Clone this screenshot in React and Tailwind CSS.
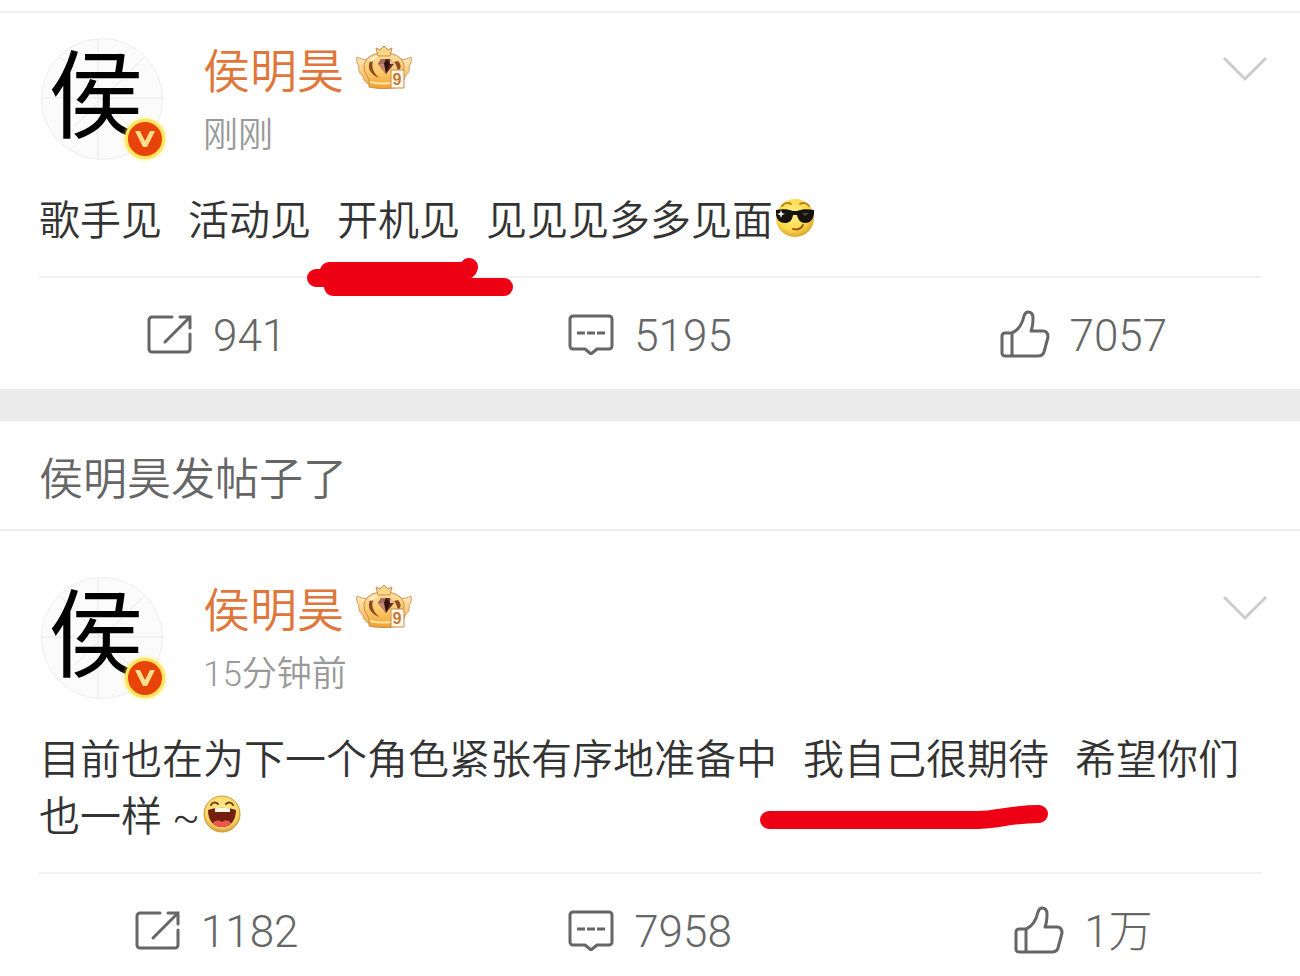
// src/App.jsx
import React from 'react';

const CrownBadge = () => (
  <svg viewBox="0 0 56 46" className="mt-[5px] w-14 h-[46px]" aria-label="VIP 9" role="img">
    <defs>
      <linearGradient id="crownGold" x1="0" y1="0" x2="0" y2="1">
        <stop offset="0" stopColor="#ffe0a0" />
        <stop offset="0.55" stopColor="#fbc869" />
        <stop offset="1" stopColor="#efa02e" />
      </linearGradient>
      <linearGradient id="crownWing" x1="0" y1="0" x2="0" y2="1">
        <stop offset="0" stopColor="#ffe9bd" />
        <stop offset="1" stopColor="#f5b24c" />
      </linearGradient>
    </defs>
    {/* wings */}
    <path d="M13 14C9 15 4 14 1 12c-1 3 0 7 2 9-1 5 1 8 4 10 0 4 3 7 7 9zM43 14c4 1 9 0 12-2 1 3 0 7-2 9 1 5-1 8-4 10 0 4-3 7-7 9z" fill="url(#crownWing)" stroke="#d79a5c" strokeWidth="1" />
    {/* dome and base */}
    <path d="M28 8C15 8 8 14 8 22c0 6 4 9 5 13v7c9 2 21 2 30 0v-7c1-4 5-7 5-13 0-8-7-14-20-14z" fill="url(#crownGold)" stroke="#cf8c4c" strokeWidth="1" />
    <path d="M14 37c9 2 19 2 28 0" fill="none" stroke="#ffe6a5" strokeWidth="2" />
    <path d="M14 16c-3 7 0 13 9 17-5-5-8-10-6-17zM42 16c4 4 3 8 0 10-1-4-2-7-4-9z" fill="#8a4a22" />
    <path d="M12 17c2-4 6-6 11-6-3 2-6 3-7 6-2-1-3-1-4 0z" fill="#fff3cc" />
    {/* small crown */}
    <path d="M20 3l4 2 4-4 4 4 4-2-2 8H22z" fill="#fbd78a" stroke="#cf8c4c" strokeWidth="1" strokeLinejoin="round" />
    {/* gem */}
    <path d="M25 14h9l4 5-8 10-8-10z" fill="#683026" />
    <path d="M25 14h5l-2 5h-6z" fill="#a46f61" />
    <path d="M30 14l4 5-4 10-2-10z" fill="#32120f" />
    <path d="M34 14l4 5h-4z" fill="#edc0a4" />
    <path d="M22 19h6l2 10z" fill="#ca8871" />
    {/* level */}
    <path d="M35 25h13v18H35z" fill="#fff7e4" stroke="#c78a4e" strokeWidth="1" />
    <text x="41" y="40" textAnchor="middle" fontSize="16" fontWeight="700" fill="#bd7a3d" fontFamily="Liberation Sans, sans-serif">9</text>
  </svg>
);

const CoolEmoji = () => (
  <svg viewBox="0 0 40 40" className="inline-block ml-0.5 w-10 h-10 align-middle mb-3" role="img" aria-label="酷">
    <defs>
      <radialGradient id="coolFace" cx="0.45" cy="0.4" r="0.6">
        <stop offset="0" stopColor="#fff08a" />
        <stop offset="0.7" stopColor="#fbd94b" />
        <stop offset="1" stopColor="#dca52c" />
      </radialGradient>
    </defs>
    <circle cx="20" cy="20" r="19" fill="url(#coolFace)" />
    <path d="M7 8c2-3 6-4 9-2M25 6c3-2 7-1 9 2" fill="none" stroke="#b98321" strokeWidth="2" strokeLinecap="round" />
    <path d="M1 12c6-1 12-1 17 1h4c5-2 11-2 17-1v4c-1 6-4 9-9 9-4 0-7-3-8-8h-4c-1 6-4 8-8 8-5 0-8-3-9-8z" fill="#17130f" />
    <path d="M27 15h7l-4 3z" fill="#4d4740" />
    <path d="M6 12l1 3 3 1-3 1-1 3-1-3-3-1 3-1z" fill="#ffffff" />
    <path d="M18 31c4 1 8 0 10-4" fill="none" stroke="#9a5a18" strokeWidth="2" strokeLinecap="round" />
  </svg>
);

const LaughEmoji = () => (
  <svg viewBox="0 0 40 40" className="inline-block ml-0.5 w-10 h-10 align-middle mb-3" role="img" aria-label="哈哈">
    <defs>
      <radialGradient id="laughFace" cx="0.5" cy="0.4" r="0.6">
        <stop offset="0" stopColor="#ffed96" />
        <stop offset="0.75" stopColor="#f9d865" />
        <stop offset="1" stopColor="#d79b36" />
      </radialGradient>
      <clipPath id="laughMouth">
        <path d="M6 16c9-3 19-3 28 0 0 10-5 17-14 17S6 26 6 16z" />
      </clipPath>
    </defs>
    <circle cx="20" cy="20" r="18" fill="url(#laughFace)" stroke="#d3963a" strokeWidth="1" />
    <path d="M9 11c1-3 5-3 7-1M24 10c2-2 6-2 7 1" fill="none" stroke="#6b421a" strokeWidth="2" strokeLinecap="round" />
    <g clipPath="url(#laughMouth)">
      <rect x="5" y="12" width="30" height="23" fill="#74200f" />
      <path d="M9 34c1-8 8-9 11-6 3-3 10-2 11 6z" fill="#ed5650" />
      <path d="M13 13h15v5H13z" fill="#fffbe6" />
    </g>
  </svg>
);

const ShareIcon = () => (
  <svg viewBox="0 0 46 42" className="w-[46px] h-[42px]" fill="none" stroke="currentColor" strokeWidth="3" aria-hidden="true">
    <path d="M25 4H5a3 3 0 0 0-3 3v29a3 3 0 0 0 3 3h35a3 3 0 0 0 3-3V21" strokeLinecap="round" />
    <path d="M33 4h10v11M43 4L18 29" strokeLinecap="round" />
  </svg>
);

const CommentIcon = () => (
  <svg viewBox="0 0 46 42" className="w-[46px] h-[42px]" fill="none" stroke="currentColor" strokeWidth="3" aria-hidden="true">
    <path d="M5 3h36a3 3 0 0 1 3 3v27a3 3 0 0 1-3 3H29l-6 5-6-5H5a3 3 0 0 1-3-3V6a3 3 0 0 1 3-3z" strokeLinejoin="round" />
    <path d="M9 20h8M19 20h8M29 20h8" />
  </svg>
);

const LikeIcon = () => (
  <svg viewBox="0 0 50 48" className="w-[50px] h-12" fill="none" stroke="currentColor" strokeWidth="3" strokeLinejoin="round" aria-hidden="true">
    <path d="M12 23H5a3 3 0 0 0-3 3v17a3 3 0 0 0 3 3h33c3 0 5-1 6-4l4-15c0-4-2-6-5-6H31c2-5 2-9 2-13 0-4-2-6-5-6-2 0-3 1-4 4-2 9-5 14-12 17zM12 23v23" />
  </svg>
);

const Avatar = () => (
  <div className="relative w-[122px] h-[122px] shrink-0 rounded-full bg-[#fbfbfb] border border-[#eeeeee]">
    <svg viewBox="0 0 120 120" className="absolute inset-0 w-full h-full" fill="none" stroke="#e9e9e9" aria-hidden="true">
      <path d="M56 0v120M0 59h120" />
      <path d="M18 18l84 84M102 18l-84 84" strokeDasharray="20 6" />
    </svg>
    <span className="relative block pl-1.5 pt-2.5 text-[96px] leading-[96px] text-black">侯</span>
    <span className="absolute -right-[3px] bottom-0 w-10 h-10 rounded-full bg-[#e84409] border-3 border-[#ffe45c] flex items-center justify-center shadow-[0_0_4px_#ffe45c]">
      <svg viewBox="0 0 20 18" className="w-5 h-[18px]" aria-hidden="true">
        <path d="M0 1h5l5 10 5-10h5l-8 16H8z" fill="#ffdf8e" />
      </svg>
    </span>
  </div>
);

// marker strokes drawn over the highlighted phrases
const DoubleStroke = () => (
  <svg viewBox="0 0 208 42" className="absolute left-[-31px] top-[63px] w-[208px] h-[42px] max-w-none" fill="none" stroke="#ee0014" strokeWidth="18" strokeLinecap="round" strokeLinejoin="round" aria-hidden="true">
    <path d="M10 22h12M23 15h135q4 0 5-4M27 23h128M27 31h171" />
  </svg>
);

const SingleStroke = () => (
  <svg viewBox="0 0 292 28" className="absolute left-[-44px] top-[70px] w-[292px] h-7 max-w-none" fill="none" stroke="#ee0014" strokeWidth="18" strokeLinecap="round" aria-hidden="true">
    <path d="M10 18h208c20 0 34-6 62-6" />
  </svg>
);

const Marked = ({ children, stroke }) => (
  <span className="relative inline-block">
    {children}
    {stroke}
  </span>
);

const Gap = () => <span className="mr-4"> </span>;

const posts = [
  {
    id: 1,
    time: '刚刚',
    content: (
      <>
        歌手见<Gap />活动见<Gap />
        <Marked stroke={<DoubleStroke />}>开机见</Marked>
        <Gap />见见见多多见面<CoolEmoji />
      </>
    ),
    reposts: '941',
    comments: '5195',
    likes: '7057',
  },
  {
    id: 2,
    title: '侯明昊发帖子了',
    time: '15分钟前',
    content: (
      <>
        目前也在为下一个角色紧张有序地准备中<Gap />
        <Marked stroke={<SingleStroke />}>我自己很期待</Marked>
        <Gap />希望你们也一样{'\u00a0'}~
        <LaughEmoji />
      </>
    ),
    reposts: '1182',
    comments: '7958',
    likes: '1万',
  },
];

const Action = ({ icon, label, count }) => (
  <button type="button" aria-label={`${label} ${count}`} className="flex items-center justify-center gap-5 text-[#666666]">
    {icon}
    <span className="pt-1 text-[44px] leading-[56px] font-light">{count}</span>
  </button>
);

const Post = ({ post }) => (
  <article className={post.title ? 'border-t-2 border-[#ededed] pt-[46px]' : 'border-t-2 border-[#ededed] pt-[25px]'}>
    <header className="flex items-start pl-[41px] pr-8">
      <Avatar />
      <div className="ml-10 pt-0.5 flex-1">
        <div className="flex items-start gap-3">
          <a href="#profile" className="text-[47px] leading-[64px] font-[350] text-[#e0763a]">侯明昊</a>
          <CrownBadge />
        </div>
        <p className="mt-2 text-[35px] leading-[48px] font-[350] text-[#999999]">{post.time}</p>
      </div>
      <button type="button" aria-label="更多" className="mt-[18px]">
        <svg viewBox="0 0 46 28" className="w-[46px] h-7" fill="none" stroke="#cccccc" strokeWidth="3" aria-hidden="true">
          <path d="M2 2l21 21L44 2" />
        </svg>
      </button>
    </header>
    <p className="mt-[33px] mx-[39px] pb-[26px] border-b-2 border-[#f1f1f1] text-[41px] leading-[57px] font-[350] text-[#333333]">
      {post.content}
    </p>
    <footer className="grid grid-cols-3 h-[111px]">
      <Action icon={<ShareIcon />} label="转发" count={post.reposts} />
      <Action icon={<CommentIcon />} label="评论" count={post.comments} />
      <Action icon={<LikeIcon />} label="赞" count={post.likes} />
    </footer>
  </article>
);

const App = () => (
  <main className="bg-white pt-[11px] overflow-hidden font-[Roboto,'Noto_Sans_CJK_SC',sans-serif]">
    {posts.map((post) => (
      <section key={post.id}>
        {post.title && (
          <h2 className="border-t-[32px] border-[#ececec] pt-[27px] pb-[17px] px-[39px] text-[44px] leading-[64px] font-[350] text-[#666666]">
            {post.title}
          </h2>
        )}
        <Post post={post} />
      </section>
    ))}
  </main>
);

export default App;
